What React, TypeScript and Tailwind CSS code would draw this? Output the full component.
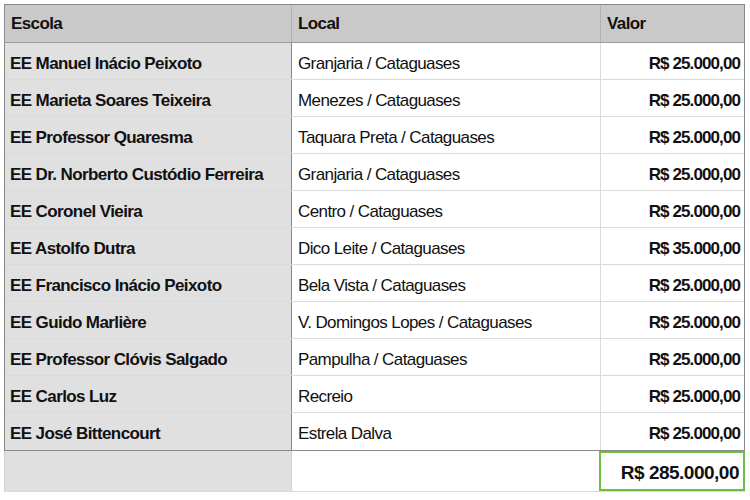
const rows = [
  { escola: 'EE Manuel Inácio Peixoto', local: 'Granjaria / Cataguases', valor: 'R$ 25.000,00' },
  { escola: 'EE Marieta Soares Teixeira', local: 'Menezes / Cataguases', valor: 'R$ 25.000,00' },
  { escola: 'EE Professor Quaresma', local: 'Taquara Preta / Cataguases', valor: 'R$ 25.000,00' },
  { escola: 'EE Dr. Norberto Custódio Ferreira', local: 'Granjaria / Cataguases', valor: 'R$ 25.000,00' },
  { escola: 'EE Coronel Vieira', local: 'Centro / Cataguases', valor: 'R$ 25.000,00' },
  { escola: 'EE Astolfo Dutra', local: 'Dico Leite / Cataguases', valor: 'R$ 35.000,00' },
  { escola: 'EE Francisco Inácio Peixoto', local: 'Bela Vista / Cataguases', valor: 'R$ 25.000,00' },
  { escola: 'EE Guido Marlière', local: 'V. Domingos Lopes / Cataguases', valor: 'R$ 25.000,00' },
  { escola: 'EE Professor Clóvis Salgado', local: 'Pampulha / Cataguases', valor: 'R$ 25.000,00' },
  { escola: 'EE Carlos Luz', local: 'Recreio', valor: 'R$ 25.000,00' },
  { escola: 'EE José Bittencourt', local: 'Estrela Dalva', valor: 'R$ 25.000,00' },
];

export default function App() {
  return (
    <div
      className="w-[750px] h-[500px] bg-white pl-[4px] pt-[4px] text-[#111] text-[17px] tracking-[-0.6px]"
      style={{ fontFamily: '"Liberation Sans", Arial, sans-serif' }}
    >
      <div className="w-[741px] border border-[#8a8a8a]">
        {/* Header */}
        <div className="grid grid-cols-[287px_309px_143px] h-[38px] bg-[#c9c9c9] border-b border-[#9a9a9a]">
          <div className="flex items-center px-[6px] border-r border-[#b0b0b0] font-semibold">Escola</div>
          <div className="flex items-center px-[6px] border-r border-[#b0b0b0] font-semibold">Local</div>
          <div className="flex items-center px-[6px] font-semibold">Valor</div>
        </div>

        {/* Rows */}
        {rows.map((r, i) => (
          <div
            key={i}
            className={`grid grid-cols-[287px_309px_143px] h-[37px] ${i < rows.length - 1 ? 'border-b border-[#dadada]' : ''}`}
          >
            <div className="flex items-center pt-[5px] pl-[5px] pr-[6px] bg-[#e0e0e0] border-r border-[#8a8a8a] font-bold">
              {r.escola}
            </div>
            <div className="flex items-center pt-[5px] px-[6px] border-r border-[#dadada]">{r.local}</div>
            <div className="flex items-center justify-end pt-[5px] px-[4px] font-semibold tracking-[-0.9px]">{r.valor}</div>
          </div>
        ))}
      </div>

      {/* Total */}
      <div className="w-[741px] grid grid-cols-[288px_307px_146px] h-[41px] border-b border-[#dadada]">
        <div className="bg-[#e0e0e0] border-l border-[#d0d0d0] border-r border-[#8a8a8a]" />
        <div />
        <div className="flex items-center justify-end pt-[5px] px-[4px] border-2 border-[#6cbf45] text-[19px] font-semibold tracking-[-0.5px]">
          R$ 285.000,00
        </div>
      </div>
    </div>
  );
}
